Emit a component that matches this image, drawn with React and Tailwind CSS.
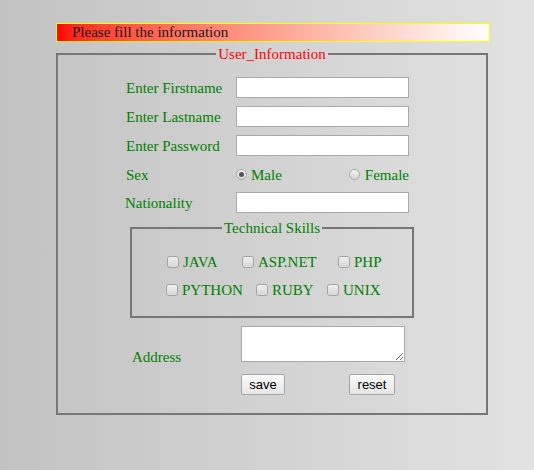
import React from 'react';

const serif = "font-['Liberation_Serif','Times_New_Roman',serif]";

const Box = ({ className = '' }) => (
  <span className={`inline-block w-[12px] h-[12px] rounded-[3px] border border-[#a3a3a3] bg-linear-to-b from-[#f0f0f0] to-[#d6d6d6] shadow-[inset_0_0_1px_#fff] ${className}`}></span>
);

const Radio = ({ checked }) => (
  <span className="inline-flex items-center justify-center w-[11px] h-[11px] rounded-full border border-[#a8a8a8] bg-linear-to-b from-[#f2f2f2] to-[#d8d8d8]">
    {checked && <span className="w-[5px] h-[5px] rounded-full bg-[#555]"></span>}
  </span>
);

const Skill = ({ name, className = '' }) => (
  <label className={`flex items-center ${className}`}>
    <Box />
    <span className="ml-[4px]">{name}</span>
  </label>
);

const Row = ({ label, children, labelClass = '' }) => (
  <div className="flex items-center h-[29px]">
    <span className={`w-[110px] ${labelClass}`}>{label}</span>
    {children}
  </div>
);

const TextBox = ({ type = 'text' }) => (
  <input type={type} className="w-[173px] h-[21px] bg-white border border-[#a9a9a9] outline-none" />
);

export default function App() {
  return (
    <div className={`min-h-[470px] w-full bg-linear-to-r from-[#c2c2c2] to-[#e2e2e2] pt-[23px] pl-[56px] ${serif} text-[15px] leading-[18px]`}>
      <div className="w-[434px] h-[19px] border border-[#ffff00] bg-linear-to-r from-[#ff0000] to-[#ffffff] pl-[15px] text-[#1a1a1a] leading-[17px]">
        Please fill the information
      </div>

      <fieldset className="w-[432px] mt-[3px] border-2 border-[#777] pt-[10px] pb-[18px] text-[#008000]">
        <legend className="mx-auto px-[2px] text-[#ff0000]">User_Information</legend>

        <div className="pl-[68px]">
          <Row label="Enter Firstname"><TextBox /></Row>
          <Row label="Enter Lastname"><TextBox /></Row>
          <Row label="Enter Password"><TextBox type="password" /></Row>
          <Row label="Sex">
            <div className="flex items-center w-[173px] justify-between">
              <label className="flex items-center"><Radio checked /><span className="ml-[4px]">Male</span></label>
              <label className="flex items-center"><Radio /><span className="ml-[5px]">Female</span></label>
            </div>
          </Row>
          <div className="flex items-center h-[27px]">
            <span className="w-[110px] -ml-[1px] mr-[1px]">Nationality</span>
            <TextBox />
          </div>
        </div>

        <fieldset className="ml-[72px] mt-[3px] w-[284px] border-2 border-[#777] pt-[11px] pb-[12px]">
          <legend className="mx-auto px-[2px]">Technical Skills</legend>
          <div className="flex items-center h-[28px] pl-[35px]">
            <Skill name="JAVA" className="w-[75px]" />
            <Skill name="ASP.NET" className="w-[96px]" />
            <Skill name="PHP" />
          </div>
          <div className="flex items-center h-[28px] pl-[34px]">
            <Skill name="PYTHON" className="w-[90px]" />
            <Skill name="RUBY" className="w-[71px]" />
            <Skill name="UNIX" />
          </div>
        </fieldset>

        <div className="flex mt-[8px] pl-[74px]">
          <span className="w-[109px] self-center mb-[8px]">Address</span>
          <div className="flex flex-col">
            <textarea className="w-[164px] h-[36px] bg-white border border-[#a9a9a9] outline-none resize"></textarea>
            <div className="flex mt-[12px] font-['Liberation_Sans',Arial,sans-serif] text-[13px] text-black">
              <button className="w-[44px] h-[21px] border border-[#a6a6a6] rounded-[2px] bg-linear-to-b from-[#fafafa] to-[#e6e6e6]">save</button>
              <button className="ml-[64px] w-[46px] h-[21px] border border-[#a6a6a6] rounded-[2px] bg-linear-to-b from-[#fafafa] to-[#e6e6e6]">reset</button>
            </div>
          </div>
        </div>
      </fieldset>
    </div>
  );
}
